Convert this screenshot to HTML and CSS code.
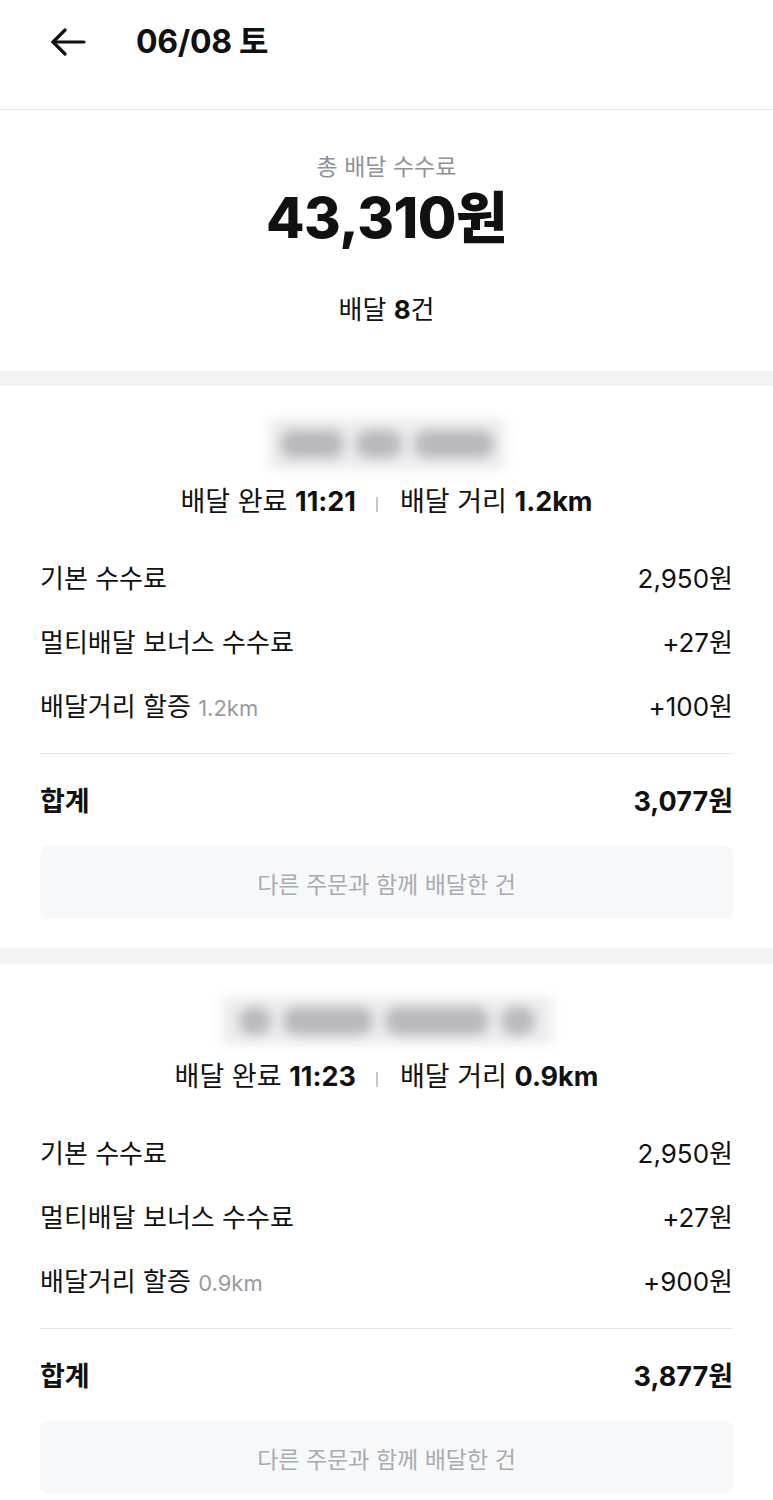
FILE: index.html
```html
<!DOCTYPE html>
<html lang="ko">
<head>
  <meta charset="UTF-8">
  <meta name="viewport" content="width=device-width, initial-scale=1.0">
  <title>06/08 토</title>
  <link rel="stylesheet" href="styles.css">
</head>
<body>
  <header class="topbar">
    <a class="back" href="#" aria-label="뒤로">
      <svg width="36" height="28" viewBox="0 0 36 28" fill="none" stroke="#111" stroke-width="3.2" stroke-linecap="round" stroke-linejoin="round">
        <path d="M34 14H3"/>
        <path d="M15 2L3 14l12 12"/>
      </svg>
    </a>
    <h1 class="title">06/08 토</h1>
  </header>

  <section class="summary">
    <p class="summary-label">총 배달 수수료</p>
    <p class="summary-total">43,310원</p>
    <p class="summary-count">배달 <strong>8</strong>건</p>
  </section>

  <section class="order">
    <div class="store-name blur-wide-1"><span></span><span></span><span></span></div>
    <p class="order-info">배달 완료 <strong>11:21</strong><span class="sep"></span>배달 거리 <strong>1.2km</strong></p>

    <div class="fee-row"><span>기본 수수료</span><span>2,950원</span></div>
    <div class="fee-row"><span>멀티배달 보너스 수수료</span><span>+27원</span></div>
    <div class="fee-row"><span>배달거리 할증 <em>1.2km</em></span><span>+100원</span></div>

    <div class="fee-row total"><span>합계</span><span>3,077원</span></div>
    <button class="together">다른 주문과 함께 배달한 건</button>
  </section>

  <section class="order">
    <div class="store-name blur-wide-2"><span></span><span></span><span></span><span></span></div>
    <p class="order-info">배달 완료 <strong>11:23</strong><span class="sep"></span>배달 거리 <strong>0.9km</strong></p>

    <div class="fee-row"><span>기본 수수료</span><span>2,950원</span></div>
    <div class="fee-row"><span>멀티배달 보너스 수수료</span><span>+27원</span></div>
    <div class="fee-row"><span>배달거리 할증 <em>0.9km</em></span><span>+900원</span></div>

    <div class="fee-row total"><span>합계</span><span>3,877원</span></div>
    <button class="together">다른 주문과 함께 배달한 건</button>
  </section>
</body>
</html>
```

FILE: styles.css
```css
body {
  margin: 0;
  padding: 0;
  background-color: #f2f3f5;
  font-family: Inter, "Noto Sans CJK KR", sans-serif;
  color: #111;
}

p {
  margin: 0;
}

.topbar {
  height: 110px;
  box-sizing: border-box;
  padding: 20px 0 0 50px;
  display: flex;
  align-items: flex-start;
  gap: 50px;
  background-color: #fff;
  border-bottom: 1px solid #e4e5e9;
}

.back {
  display: flex;
  align-items: center;
  height: 44px;
}

.title {
  margin: 0;
  height: 44px;
  line-height: 44px;
  font-size: 32px;
  font-weight: 700;
  letter-spacing: -0.3px;
}

.summary {
  background-color: #fff;
  padding: 43px 0 45px;
  text-align: center;
  margin-bottom: 15px;
}

.summary-label {
  font-size: 23px;
  line-height: 28px;
  color: #8e9096;
}

.summary-total {
  margin-top: 5px;
  font-size: 56px;
  line-height: 64px;
  font-weight: 800;
  letter-spacing: -0.5px;
}

.summary-count {
  margin-top: 44px;
  font-size: 26px;
  line-height: 32px;
}

.summary-count strong {
  font-weight: 700;
}

.order {
  background-color: #fff;
  padding: 33px 40px 29px;
  margin-bottom: 16px;
}

.store-name {
  margin: 0 auto;
  height: 50px;
  display: flex;
  align-items: center;
  justify-content: center;
  gap: 12px;
  background-color: #ececee;
  filter: blur(6px);
}

.store-name span {
  height: 28px;
  background-color: #b9b9bc;
  border-radius: 14px;
}

.blur-wide-1 {
  width: 236px;
}

.blur-wide-1 span:nth-child(1) { width: 64px; }
.blur-wide-1 span:nth-child(2) { width: 46px; }
.blur-wide-1 span:nth-child(3) { width: 80px; }

.blur-wide-2 {
  width: 330px;
  height: 47px;
}

.blur-wide-2 span:nth-child(1) { width: 32px; }
.blur-wide-2 span:nth-child(2) { width: 90px; }
.blur-wide-2 span:nth-child(3) { width: 104px; }
.blur-wide-2 span:nth-child(4) { width: 34px; }

.order-info {
  margin-top: 17px;
  text-align: center;
  font-size: 27px;
  line-height: 32px;
}

.order-info strong {
  font-weight: 700;
}

.sep {
  display: inline-block;
  width: 2px;
  height: 15px;
  margin: 0 22px 0 20px;
  background-color: #c4c7cc;
  vertical-align: -1px;
}

.fee-row {
  display: flex;
  justify-content: space-between;
  align-items: center;
  height: 64px;
  font-size: 26px;
}

.order-info + .fee-row {
  margin-top: 26px;
}

.fee-row em {
  font-style: normal;
  font-size: 22px;
  color: #97999e;
}

.fee-row.total {
  margin-top: 17px;
  border-top: 1px solid #e4e5e9;
  padding-top: 13px;
  font-size: 27px;
  font-weight: 700;
}

.together {
  display: block;
  width: 100%;
  height: 73px;
  margin-top: 15px;
  border: none;
  border-radius: 8px;
  background-color: #f7f8fa;
  font-family: Inter, "Noto Sans CJK KR", sans-serif;
  font-size: 23px;
  color: #a7abb2;
  cursor: pointer;
}
```
